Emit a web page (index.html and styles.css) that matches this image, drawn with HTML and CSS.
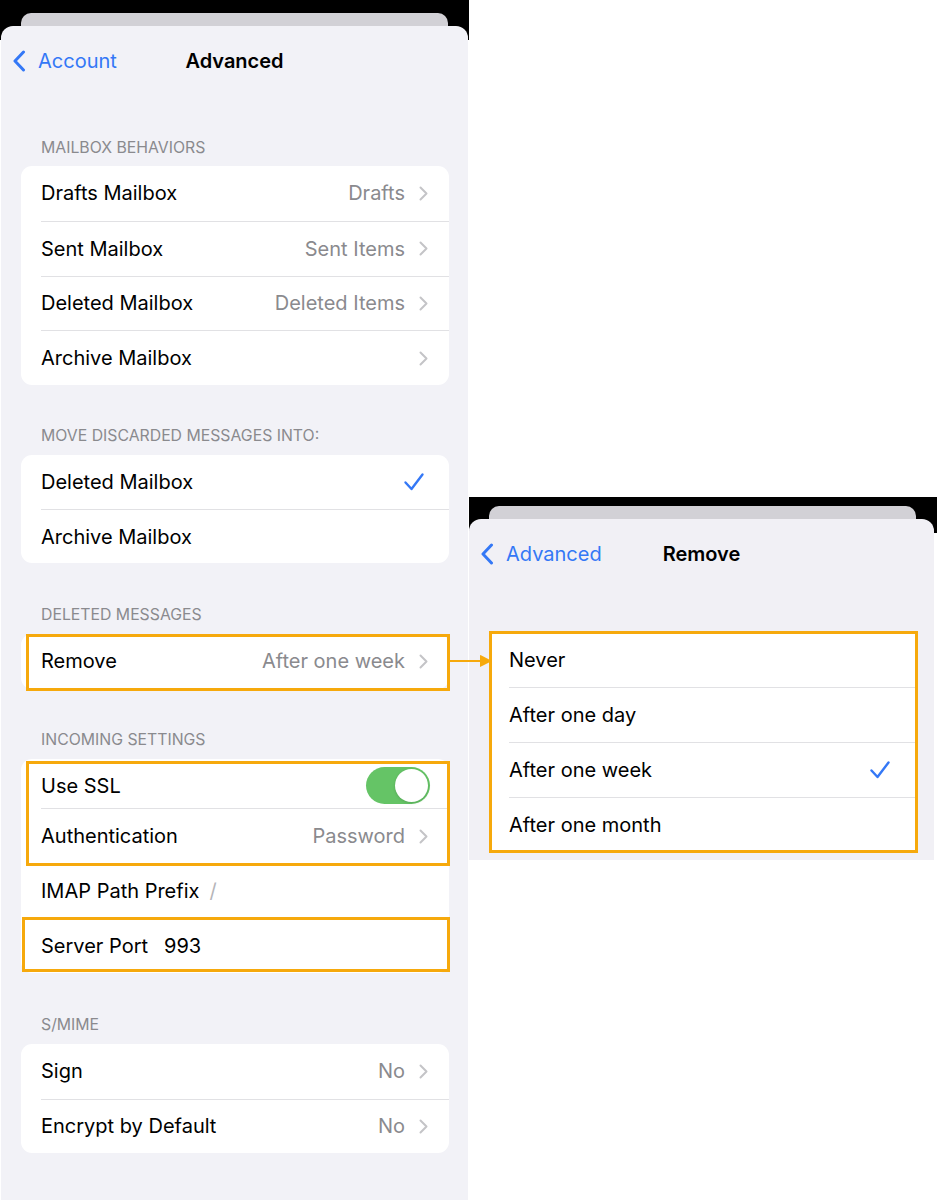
FILE: index.html
```html
<!DOCTYPE html>
<html lang="en">
  <head>
    <meta charset="UTF-8" />
    <meta name="viewport" content="width=device-width, initial-scale=1.0" />
    <title>Mail account - Advanced</title>
    <link rel="stylesheet" href="styles.css">
  </head>
  <body>
    <div class="page">
      <!-- Advanced settings screen -->
      <section class="phone phone-main">
        <div class="phone-top"><div class="back-card"></div></div>
        <div class="sheet">
          <nav class="navbar">
            <a class="nav-back">
              <svg class="back-icon" viewBox="0 0 14 22"><path d="M11.5 2 L3 11 L11.5 20" /></svg>
              Account
            </a>
            <h1 class="nav-title">Advanced</h1>
          </nav>

          <div class="section section-first">
            <div class="section-header">MAILBOX BEHAVIORS</div>
            <div class="group group-mailbox">
              <div class="row">
                <span class="row-label">Drafts Mailbox</span>
                <span class="row-value">Drafts</span>
                <svg class="chevron" viewBox="0 0 9 15"><path d="M1.5 1.5 L7.5 7.5 L1.5 13.5" /></svg>
              </div>
              <div class="row">
                <span class="row-label">Sent Mailbox</span>
                <span class="row-value">Sent Items</span>
                <svg class="chevron" viewBox="0 0 9 15"><path d="M1.5 1.5 L7.5 7.5 L1.5 13.5" /></svg>
              </div>
              <div class="row">
                <span class="row-label">Deleted Mailbox</span>
                <span class="row-value">Deleted Items</span>
                <svg class="chevron" viewBox="0 0 9 15"><path d="M1.5 1.5 L7.5 7.5 L1.5 13.5" /></svg>
              </div>
              <div class="row">
                <span class="row-label">Archive Mailbox</span>
                <span class="row-value"></span>
                <svg class="chevron" viewBox="0 0 9 15"><path d="M1.5 1.5 L7.5 7.5 L1.5 13.5" /></svg>
              </div>
            </div>
          </div>

          <div class="section">
            <div class="section-header">MOVE DISCARDED MESSAGES INTO:</div>
            <div class="group group-tight">
              <div class="row">
                <span class="row-label">Deleted Mailbox</span>
                <svg class="check" viewBox="0 0 22 20"><path d="M2.5 10.5 L8.5 17 L19.5 2.5" /></svg>
              </div>
              <div class="row">
                <span class="row-label">Archive Mailbox</span>
              </div>
            </div>
          </div>

          <div class="section section-deleted">
            <div class="section-header">DELETED MESSAGES</div>
            <div class="group">
              <div class="mark mark-remove">
                <div class="row">
                  <span class="row-label">Remove</span>
                  <span class="row-value">After one week</span>
                  <svg class="chevron" viewBox="0 0 9 15"><path d="M1.5 1.5 L7.5 7.5 L1.5 13.5" /></svg>
                </div>
              </div>
            </div>
          </div>

          <div class="section">
            <div class="section-header">INCOMING SETTINGS</div>
            <div class="group group-incoming">
              <div class="mark mark-ssl">
                <div class="row row-ssl">
                  <span class="row-label">Use SSL</span>
                  <span class="switch on"></span>
                </div>
                <div class="row">
                  <span class="row-label">Authentication</span>
                  <span class="row-value">Password</span>
                  <svg class="chevron" viewBox="0 0 9 15"><path d="M1.5 1.5 L7.5 7.5 L1.5 13.5" /></svg>
                </div>
              </div>
              <div class="row">
                <span class="row-label">IMAP Path Prefix</span>
                <span class="row-inline muted">/</span>
              </div>
              <div class="mark mark-port">
                <div class="row">
                  <span class="row-label">Server Port</span>
                  <span class="row-inline">993</span>
                </div>
              </div>
            </div>
          </div>

          <div class="section section-smime">
            <div class="section-header">S/MIME</div>
            <div class="group">
              <div class="row">
                <span class="row-label">Sign</span>
                <span class="row-value">No</span>
                <svg class="chevron" viewBox="0 0 9 15"><path d="M1.5 1.5 L7.5 7.5 L1.5 13.5" /></svg>
              </div>
              <div class="row">
                <span class="row-label">Encrypt by Default</span>
                <span class="row-value">No</span>
                <svg class="chevron" viewBox="0 0 9 15"><path d="M1.5 1.5 L7.5 7.5 L1.5 13.5" /></svg>
              </div>
            </div>
          </div>
        </div>
      </section>

      <!-- Remove picker screen -->
      <section class="phone phone-sub">
        <div class="blank"></div>
        <div class="phone-top"><div class="back-card"></div></div>
        <div class="sheet">
          <nav class="navbar">
            <a class="nav-back">
              <svg class="back-icon" viewBox="0 0 14 22"><path d="M11.5 2 L3 11 L11.5 20" /></svg>
              Advanced
            </a>
            <h1 class="nav-title">Remove</h1>
          </nav>
          <div class="group group-picker">
            <div class="mark mark-picker">
              <div class="row"><span class="row-label">Never</span></div>
              <div class="row"><span class="row-label">After one day</span></div>
              <div class="row">
                <span class="row-label">After one week</span>
                <svg class="check" viewBox="0 0 22 20"><path d="M2.5 10.5 L8.5 17 L19.5 2.5" /></svg>
              </div>
              <div class="row"><span class="row-label">After one month</span></div>
            </div>
          </div>
        </div>
      </section>

      <svg class="arrow" viewBox="0 0 44 16">
        <line x1="1" y1="8" x2="36" y2="8" />
        <polygon points="33,3.5 42,8 33,12.5" />
      </svg>
    </div>
  </body>
</html>
```

FILE: styles.css
```css
body {
  margin: 0;
  background: #fff;
  font-family: Inter, "Noto Sans", "Liberation Sans", sans-serif;
  color: #000;
}
.page {
  position: relative;
  display: flex;
  width: 937px;
  height: 1200px;
  overflow: hidden;
}
.phone {
  display: flex;
  flex-direction: column;
}
.phone-main {
  width: 469px;
  background: linear-gradient(#000 0 40px, #fff 40px);
}
.phone-sub {
  flex: 1;
  background: linear-gradient(#fff 0 497px, #000 497px 533px, #fff 533px);
}
.blank {
  height: 497px;
}
.phone-top {
  height: 26px;
  padding-top: 13px;
  box-sizing: border-box;
}
.phone-sub .phone-top {
  height: 22px;
  padding-top: 9px;
}
.back-card {
  height: 100%;
  margin: 0 21px;
  background: #d2d1d6;
  border-radius: 10px 10px 0 0;
}
.phone-sub .back-card {
  margin: 0 21px 0 20px;
}
.sheet {
  flex: 1;
  background: #f2f2f7;
  border-radius: 12px 12px 0 0;
  margin: 0 1px 0 1px;
}
.phone-sub .sheet {
  flex: none;
  margin: 0 3px 0 0;
  padding-bottom: 8px;
  background: #f1f0f5;
}

/* navigation bar */
.navbar {
  display: grid;
  grid-template-columns: 1fr auto 1fr;
  align-items: center;
  height: 70px;
}
.nav-back {
  display: flex;
  align-items: center;
  padding-left: 11px;
  color: #3478f6;
  font-size: 20px;
  white-space: nowrap;
}
.back-icon {
  width: 14px;
  height: 22px;
  margin-right: 12px;
  fill: none;
  stroke: #3478f6;
  stroke-width: 3;
  stroke-linecap: round;
  stroke-linejoin: round;
}
.nav-title {
  margin: 0;
  font-size: 20px;
  font-weight: 600;
}

/* grouped lists */
.section {
  margin-top: 42px;
}
.section-first {
  margin-top: 43px;
}
.section-first .section-header {
  padding-bottom: 9px;
}
.section-deleted {
  margin-top: 43px;
}
.section-smime {
  margin-top: 43px;
}
.section-header {
  padding: 0 20px 10px 40px;
  font-size: 15.8px;
  line-height: 18px;
  color: #8a8a8e;
}
.group {
  margin: 0 19px 0 20px;
  background: #fff;
  border-radius: 11px;
}
.row {
  display: flex;
  align-items: center;
  height: 54.5px;
  margin-left: 20px;
  padding-right: 21px;
  box-sizing: border-box;
  font-size: 20px;
  border-top: 1px solid #e1e1e4;
}
.group > .row:first-child,
.group > .mark:first-child > .row:first-child {
  border-top: none;
}
.group-mailbox .row {
  height: 54.75px;
}
.group-tight .row {
  height: 54px;
}
.group-incoming .row {
  height: 55px;
}
.group-incoming .row-ssl {
  height: 49.5px;
  padding-top: 5px;
}
.row-label {
  flex: none;
}
.row-value {
  flex: 1;
  text-align: right;
  color: #8a8a8e;
  margin-right: 14px;
}
.row-inline {
  margin-left: 16px;
}
.row-inline.muted {
  margin-left: 10px;
  color: #b5b5b9;
}
.chevron {
  width: 9px;
  height: 15px;
  fill: none;
  stroke: #c4c4c7;
  stroke-width: 2;
  stroke-linecap: round;
  stroke-linejoin: round;
}
.check {
  width: 22px;
  height: 20px;
  margin-left: auto;
  margin-right: 3px;
  fill: none;
  stroke: #3478f6;
  stroke-width: 2.4;
  stroke-linecap: round;
  stroke-linejoin: round;
}
.switch {
  position: relative;
  margin-left: auto;
  margin-right: -2px;
  width: 64px;
  height: 37px;
  border-radius: 19px;
  background: #65c466;
}
.switch::after {
  content: "";
  position: absolute;
  top: 2px;
  right: 2px;
  width: 33px;
  height: 33px;
  border-radius: 50%;
  background: #fff;
  box-shadow: 0 1px 3px rgba(0, 0, 0, 0.15);
}

/* picker screen */
.group-picker {
  margin: 43px 18px 0 20px;
  border-radius: 0;
}
.group-picker .row {
  height: 55px;
}
.group-picker .mark > .row:first-child {
  border-top: none;
}
.group-picker .check {
  margin-right: 4px;
}

/* orange annotation boxes */
.mark {
  position: relative;
}
.mark::after {
  content: "";
  position: absolute;
  border: 3px solid #f6a90c;
  pointer-events: none;
}
.mark-remove::after {
  inset: 0 -1px -2px 5px;
}
.mark-ssl::after {
  inset: 2.5px -1px -3px 5px;
}
.mark-port::after {
  inset: -1px -1px 1px 1px;
}
.mark-picker::after {
  inset: -1px -2px -1px 0;
}
.arrow {
  position: absolute;
  left: 448px;
  top: 653px;
  width: 44px;
  height: 16px;
  stroke: #f6a90c;
  stroke-width: 2;
  fill: #f6a90c;
}
```
